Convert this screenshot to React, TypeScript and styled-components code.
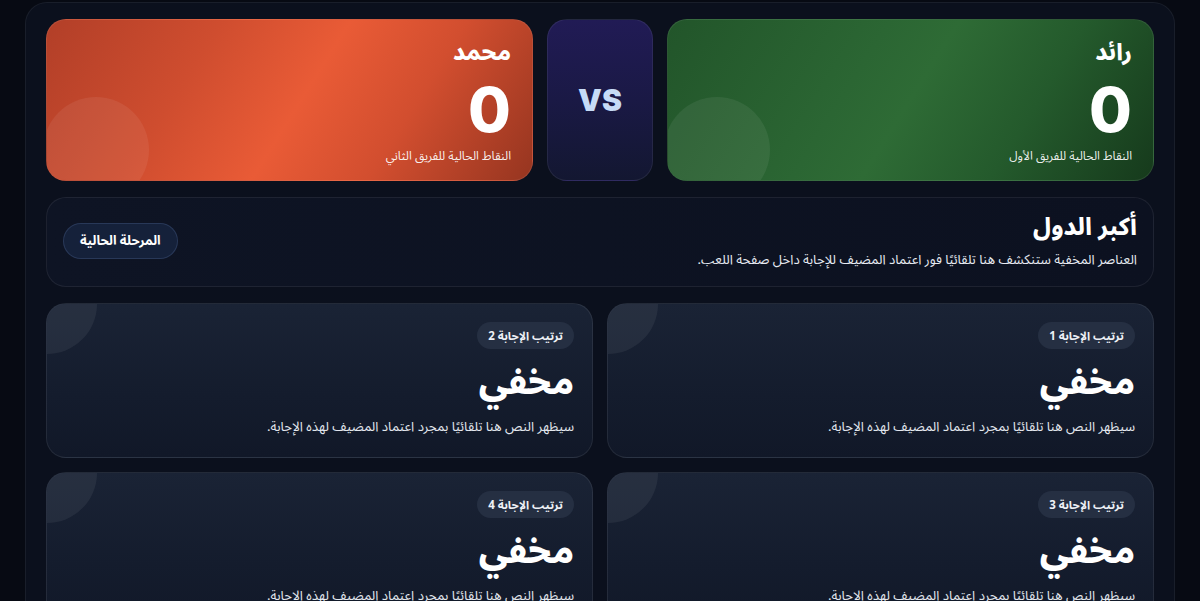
import styled, { createGlobalStyle } from "styled-components";

const arabic = `"Noto Sans Arabic", "Noto Naskh Arabic", "DejaVu Sans", sans-serif`;

const GlobalStyle = createGlobalStyle`
  html, body {
    margin: 0;
    padding: 0;
    background: #070a13;
    overflow: hidden;
  }
  * {
    box-sizing: border-box;
  }
`;

type Team = { name: string; score: number; label: string; tone: "green" | "orange" };
type Answer = { rank: number };

const teams: Team[] = [
  { name: "رائد", score: 0, label: "النقاط الحالية للفريق الأول", tone: "green" },
  { name: "محمد", score: 0, label: "النقاط الحالية للفريق الثاني", tone: "orange" },
];

const answers: Answer[] = [{ rank: 1 }, { rank: 2 }, { rank: 3 }, { rank: 4 }];

export default function App() {
  return (
    <>
      <GlobalStyle />
      <Page dir="rtl">
        <Board>
          <Scores>
            <TeamCard $tone={teams[0].tone}>
              <TeamName>{teams[0].name}</TeamName>
              <TeamScore>{teams[0].score}</TeamScore>
              <TeamLabel>{teams[0].label}</TeamLabel>
            </TeamCard>
            <Versus>VS</Versus>
            <TeamCard $tone={teams[1].tone}>
              <TeamName>{teams[1].name}</TeamName>
              <TeamScore>{teams[1].score}</TeamScore>
              <TeamLabel>{teams[1].label}</TeamLabel>
            </TeamCard>
          </Scores>

          <Stage>
            <StageText>
              <StageTitle>أكبر الدول</StageTitle>
              <StageDesc>
                العناصر المخفية ستنكشف هنا تلقائيًا فور اعتماد المضيف للإجابة داخل صفحة اللعب.
              </StageDesc>
            </StageText>
            <StagePill>المرحلة الحالية</StagePill>
          </Stage>

          <Answers>
            {answers.map((a) => (
              <AnswerCard key={a.rank}>
                <RankBadge>ترتيب الإجابة {a.rank}</RankBadge>
                <AnswerTitle>مخفي</AnswerTitle>
                <AnswerDesc>سيظهر النص هنا تلقائيًا بمجرد اعتماد المضيف لهذه الإجابة.</AnswerDesc>
              </AnswerCard>
            ))}
          </Answers>
        </Board>
      </Page>
    </>
  );
}

const Page = styled.div`
  min-height: 601px;
  padding: 2px 25px 0 25px;
  font-family: ${arabic};
  color: #ffffff;
`;

const Board = styled.div`
  background: #0b101d;
  border: 1px solid rgba(255, 255, 255, 0.06);
  border-radius: 22px;
  padding: 16px 20px 20px;
  display: flex;
  flex-direction: column;
  gap: 16px;
`;

const Scores = styled.div`
  display: grid;
  grid-template-columns: 1fr 106px 1fr;
  gap: 14px;
  height: 162px;
`;

const TeamCard = styled.div<{ $tone: "green" | "orange" }>`
  position: relative;
  overflow: hidden;
  border-radius: 20px;
  padding: 16px 21px 14px;
  display: flex;
  flex-direction: column;
  align-items: flex-start;
  border: 1px solid rgba(255, 255, 255, 0.08);
  background: ${(p) =>
    p.$tone === "green"
      ? "linear-gradient(122deg, #22552a 0%, #2b6633 38%, #2e6b35 50%, #245a2c 72%, #163a1c 100%)"
      : "linear-gradient(122deg, #b23f28 0%, #cf4d2f 30%, #e95b36 52%, #d24e2f 72%, #963520 100%)"};

  & > * {
    position: relative;
  }

  &::before {
    content: "";
    position: absolute;
    width: 106px;
    height: 106px;
    border-radius: 50%;
    left: -4px;
    top: 77px;
    background: rgba(255, 255, 255, 0.065);
  }
`;

const TeamName = styled.div`
  font-size: 23px;
  font-weight: 800;
  line-height: 34px;
`;

const TeamScore = styled.div`
  font-family: Inter, "Liberation Sans", sans-serif;
  font-size: 62px;
  font-weight: 800;
  line-height: 64px;
  margin-top: 8px;
`;

const TeamLabel = styled.div`
  font-size: 12px;
  line-height: 18px;
  margin-top: 6px;
  color: rgba(255, 255, 255, 0.92);
`;

const Versus = styled.div`
  border-radius: 20px;
  border: 1px solid rgba(255, 255, 255, 0.07);
  background: linear-gradient(180deg, #211b55 0%, #1a1945 50%, #131731 100%);
  display: grid;
  place-items: center;
  font-family: Inter, "Liberation Sans", sans-serif;
  font-size: 30px;
  font-weight: 900;
  color: #c6dbf6;
  direction: ltr;
`;

const Stage = styled.div`
  height: 90px;
  border-radius: 20px;
  border: 1px solid rgba(255, 255, 255, 0.07);
  background: linear-gradient(90deg, #0e1424 0%, #0c1120 100%);
  padding: 12px 16px 14px;
  display: flex;
  align-items: center;
  justify-content: space-between;
`;

const StageText = styled.div`
  display: flex;
  flex-direction: column;
  gap: 6px;
`;

const StageTitle = styled.div`
  font-size: 24px;
  font-weight: 800;
  line-height: 32px;
`;

const StageDesc = styled.div`
  font-size: 13.2px;
  line-height: 20px;
  color: #e7ebf2;
`;

const StagePill = styled.div`
  padding: 0 16px;
  height: 36px;
  display: flex;
  align-items: center;
  border-radius: 18px;
  background: #15213a;
  border: 1px solid rgba(120, 150, 210, 0.2);
  font-size: 13px;
  font-weight: 700;
`;

const Answers = styled.div`
  display: grid;
  grid-template-columns: 1fr 1fr;
  gap: 14px;
`;

const AnswerCard = styled.div`
  position: relative;
  overflow: hidden;
  height: 155px;
  border-radius: 20px;
  border: 1px solid rgba(255, 255, 255, 0.08);
  background: linear-gradient(180deg, #1a2335 0%, #141c2d 60%, #111828 100%);
  padding: 18px 18px 14px;
  display: flex;
  flex-direction: column;
  align-items: flex-start;

  &::before {
    content: "";
    position: absolute;
    width: 100px;
    height: 100px;
    border-radius: 50%;
    left: -50px;
    top: -50px;
    background: rgba(255, 255, 255, 0.06);
  }
`;

const RankBadge = styled.div`
  height: 27px;
  padding: 0 11px;
  display: flex;
  align-items: center;
  border-radius: 14px;
  background: #252f42;
  font-size: 11.5px;
  font-weight: 700;
  color: #eef1f6;
`;

const AnswerTitle = styled.div`
  font-size: 36px;
  font-weight: 800;
  line-height: 44px;
  margin-top: 12px;
`;

const AnswerDesc = styled.div`
  font-size: 13.2px;
  line-height: 20px;
  margin-top: 12px;
  color: #e3e7ee;
`;
